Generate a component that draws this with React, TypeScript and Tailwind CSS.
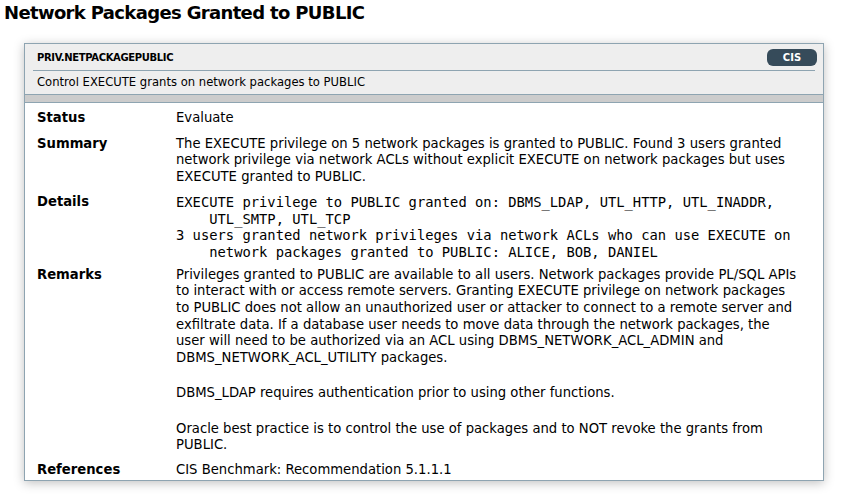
import React from "react"

const sans = { fontFamily: '"DejaVu Sans", Verdana, sans-serif' }
const mono = { fontFamily: '"DejaVu Sans Mono", Menlo, monospace' }

function Row({ label, className, children }: { label: string; className?: string; children: React.ReactNode }) {
  return (
    <div className={"flex " + (className ?? "py-[4px]")}>
      <div className="w-[139px] shrink-0 font-bold">{label}</div>
      <div className="flex-1">{children}</div>
    </div>
  )
}

export default function App() {
  return (
    <div className="w-[850px] h-[499px] bg-white text-black overflow-hidden" style={sans}>
      <h1 className="pl-[4px] pt-[1px] text-[18px] leading-[24px] font-bold tracking-[-0.65px]">Network Packages Granted to PUBLIC</h1>

      <div className="ml-[24px] mt-[18px] w-[800px] border border-[#8ea4b1] shadow-[0_2px_10px_rgba(0,0,0,0.25)]">
        <div className="bg-[#eeeeee]">
          <div className="mx-[8px] h-[27px] flex items-center justify-between border-b border-[#8ea4b1] pl-[4px]">
            <span className="text-[10px] font-bold tracking-[-0.35px]">PRIV.NETPACKAGEPUBLIC</span>
            <span className="mr-[-2px] h-[17px] w-[50px] rounded-[6px] bg-[#364b5a] text-white text-[10px] font-bold flex items-center justify-center">CIS</span>
          </div>
          <div className="h-[23px] flex items-center pl-[12px] text-[11.6px]">Control EXECUTE grants on network packages to PUBLIC</div>
        </div>
        <div className="h-[9px] bg-[#cccccc] border-y border-[#8ea4b1]" />

        <div className="px-[12px] pt-[3px] text-[13.2px] leading-[16.7px]">
          <Row label="Status">Evaluate</Row>
          <Row label="Summary" className="pt-[5px] pb-[4px]">
            The EXECUTE privilege on 5 network packages is granted to PUBLIC. Found 3 users granted<br />
            network privilege via network ACLs without explicit EXECUTE on network packages but uses<br />
            EXECUTE granted to PUBLIC.
          </Row>
          <Row label="Details" className="pt-[4px] pb-[2px]">
            <div className="text-[13.8px] leading-[16.7px] whitespace-pre" style={mono}>
              {"EXECUTE privilege to PUBLIC granted on: DBMS_LDAP, UTL_HTTP, UTL_INADDR,\n    UTL_SMTP, UTL_TCP\n3 users granted network privileges via network ACLs who can use EXECUTE on\n    network packages granted to PUBLIC: ALICE, BOB, DANIEL"}
            </div>
          </Row>
          <Row label="Remarks">
            <p>
              Privileges granted to PUBLIC are available to all users. Network packages provide PL/SQL APIs<br />
              to interact with or access remote servers. Granting EXECUTE privilege on network packages<br />
              to PUBLIC does not allow an unauthorized user or attacker to connect to a remote server and<br />
              exfiltrate data. If a database user needs to move data through the network packages, the<br />
              user will need to be authorized via an ACL using DBMS_NETWORK_ACL_ADMIN and<br />
              DBMS_NETWORK_ACL_UTILITY packages.
            </p>
            <p className="mt-[18.5px]">DBMS_LDAP requires authentication prior to using other functions.</p>
            <p className="mt-[18.5px]">
              Oracle best practice is to control the use of packages and to NOT revoke the grants from<br />
              PUBLIC.
            </p>
          </Row>
          <Row label="References" className="pt-[4px] pb-[1px]">CIS Benchmark: Recommendation 5.1.1.1</Row>
        </div>
      </div>
    </div>
  )
}
